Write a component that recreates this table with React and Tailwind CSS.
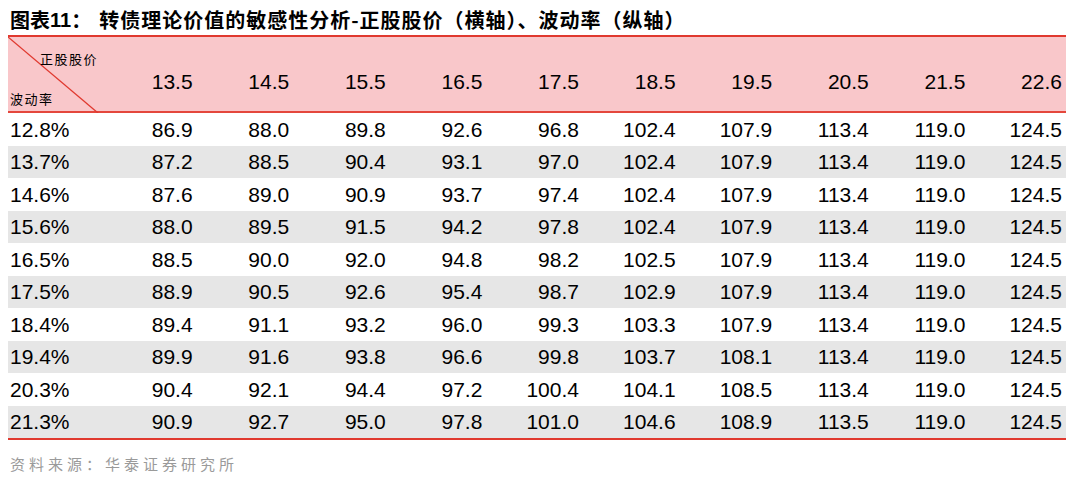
import React from 'react';

const prices = ['13.5', '14.5', '15.5', '16.5', '17.5', '18.5', '19.5', '20.5', '21.5', '22.6'];

const rows = [
  ['12.8%', '86.9', '88.0', '89.8', '92.6', '96.8', '102.4', '107.9', '113.4', '119.0', '124.5'],
  ['13.7%', '87.2', '88.5', '90.4', '93.1', '97.0', '102.4', '107.9', '113.4', '119.0', '124.5'],
  ['14.6%', '87.6', '89.0', '90.9', '93.7', '97.4', '102.4', '107.9', '113.4', '119.0', '124.5'],
  ['15.6%', '88.0', '89.5', '91.5', '94.2', '97.8', '102.4', '107.9', '113.4', '119.0', '124.5'],
  ['16.5%', '88.5', '90.0', '92.0', '94.8', '98.2', '102.5', '107.9', '113.4', '119.0', '124.5'],
  ['17.5%', '88.9', '90.5', '92.6', '95.4', '98.7', '102.9', '107.9', '113.4', '119.0', '124.5'],
  ['18.4%', '89.4', '91.1', '93.2', '96.0', '99.3', '103.3', '107.9', '113.4', '119.0', '124.5'],
  ['19.4%', '89.9', '91.6', '93.8', '96.6', '99.8', '103.7', '108.1', '113.4', '119.0', '124.5'],
  ['20.3%', '90.4', '92.1', '94.4', '97.2', '100.4', '104.1', '108.5', '113.4', '119.0', '124.5'],
  ['21.3%', '90.9', '92.7', '95.0', '97.8', '101.0', '104.6', '108.9', '113.5', '119.0', '124.5'],
];

const cjk = { fontFamily: '"Noto Sans CJK SC", "Noto Sans", sans-serif' };
const arial = { fontFamily: '"Liberation Sans", Arial, sans-serif' };

export default function App() {
  return (
    <div className="w-[1080px] h-[479px] bg-white overflow-hidden">
      {/* 标题 */}
      <div className="h-[35px] pl-[10px] pt-[5px] flex items-center text-[20px] font-bold text-black leading-none" style={cjk}>
        <span>图表</span>
        <span className="text-[20px]" style={arial}>11</span>
        <span>：</span>
        <span className="ml-[8px] tracking-[1px]">转债理论价值的敏感性分析-正股股价（横轴）、波动率（纵轴）</span>
      </div>

      {/* 表格 */}
      <div className="ml-[8px] w-[1058px] border-t-2 border-b-2 border-[#e0392f] text-[21px] text-black leading-none" style={arial}>
        <div className="relative h-[76px] bg-[#f9c7ca] border-b-2 border-[#e4473c] grid grid-cols-[92px_repeat(10,1fr)] items-center">
          <svg className="absolute left-0 top-0" width="92" height="76" viewBox="0 0 92 76">
            <line x1="0" y1="0" x2="90" y2="76" stroke="#e0392f" strokeWidth="1.3" />
          </svg>
          <div className="relative h-full text-[13px] tracking-[1.5px]" style={cjk}>
            <span className="absolute left-[32px] top-[15px]">正股股价</span>
            <span className="absolute left-[2px] top-[55px]">波动率</span>
          </div>
          {prices.map((p) => (
            <div key={p} className="text-right pr-[4px] pt-[14px]">{p}</div>
          ))}
        </div>
        {rows.map((r, i) => (
          <div
            key={r[0]}
            className={`h-[32.5px] grid grid-cols-[92px_repeat(10,1fr)] items-center ${i % 2 === 1 ? 'bg-[#e6e6e6]' : 'bg-white'}`}
          >
            <div className="pl-[2px]">{r[0]}</div>
            {r.slice(1).map((v, j) => (
              <div key={j} className="text-right pr-[4px]">{v}</div>
            ))}
          </div>
        ))}
      </div>

      {/* 来源 */}
      <div className="pl-[10px] pt-[16px] text-[15px] text-[#9a9a9a] tracking-[4px] leading-none" style={cjk}>
        资料来源：华泰证券研究所
      </div>
    </div>
  );
}
